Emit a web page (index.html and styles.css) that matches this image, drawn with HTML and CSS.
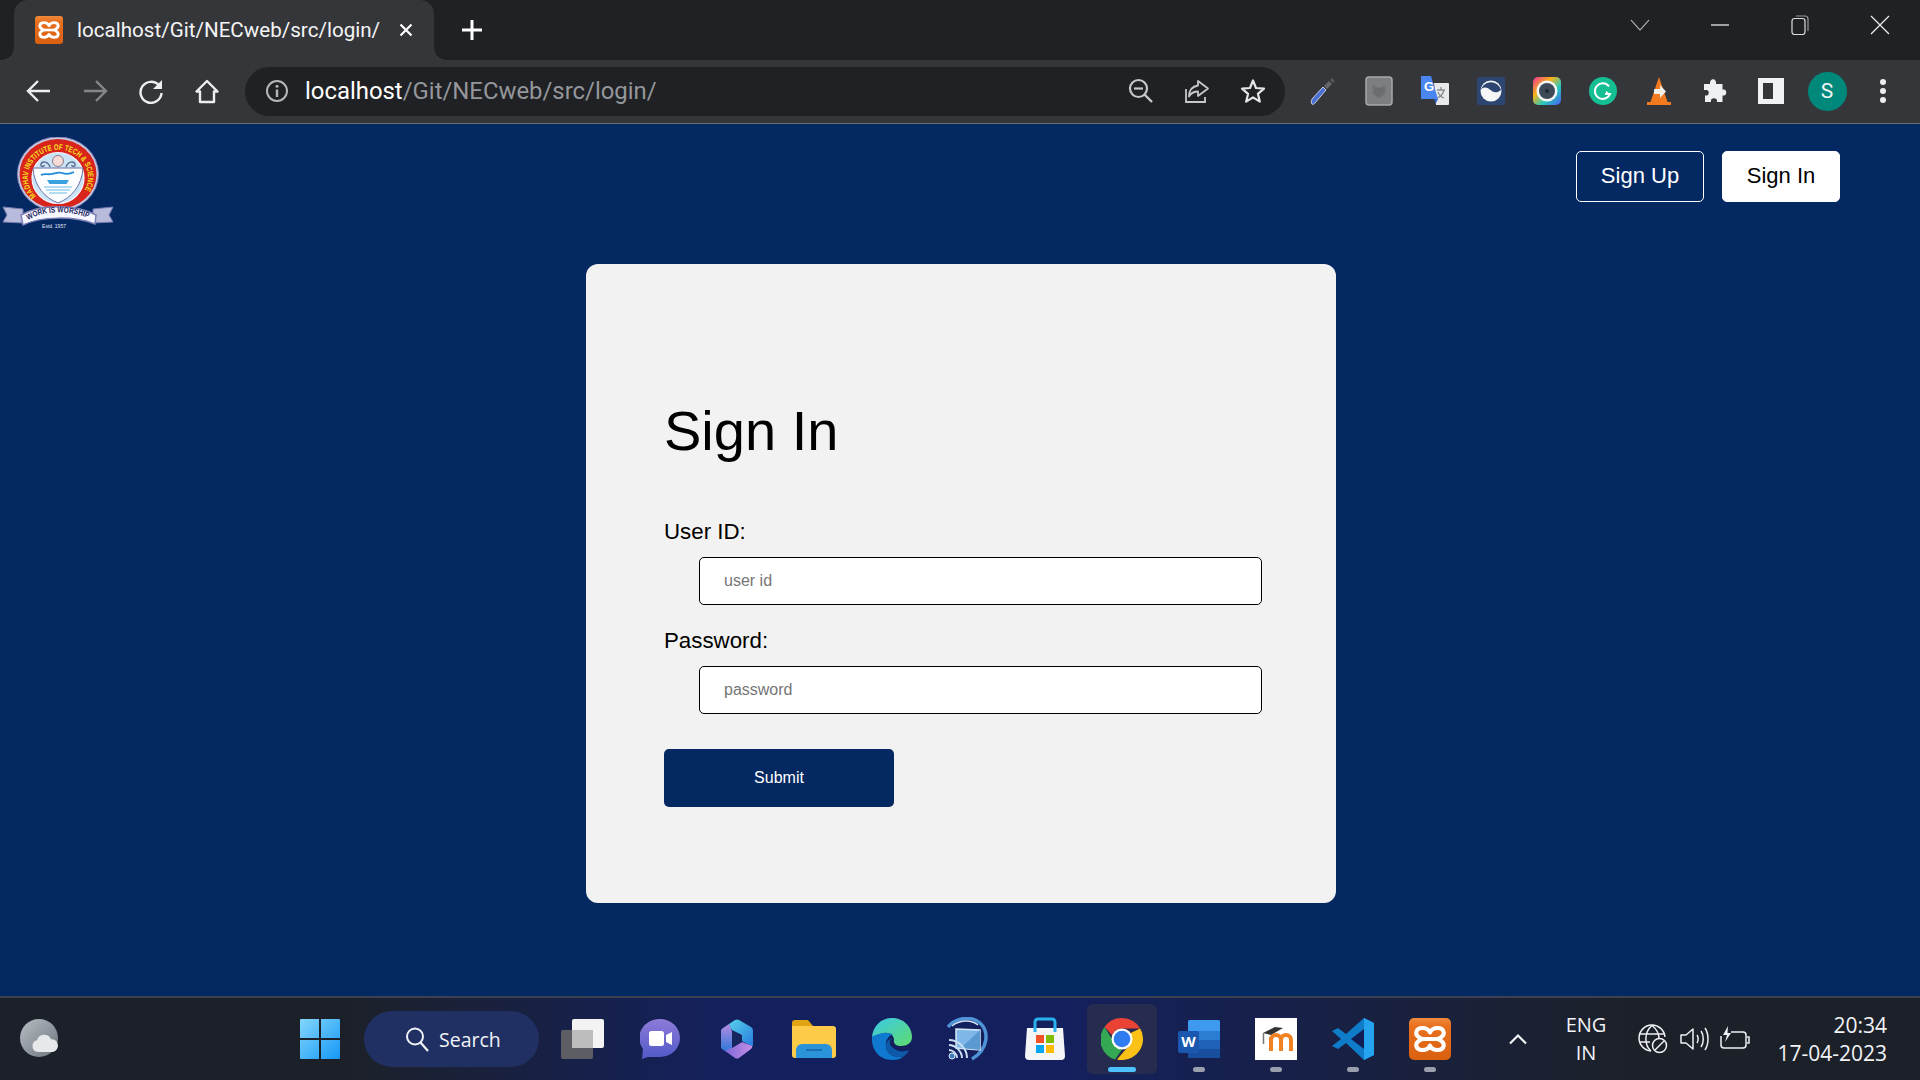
FILE: index.html
```html
<!DOCTYPE html>
<html lang="en">
<head>
    <meta charset="UTF-8">
    <meta name="viewport" content="width=device-width, initial-scale=1.0">
    <title>localhost/Git/NECweb/src/login/</title>
    <link rel="stylesheet" href="styles.css">
</head>
<body>
    <svg class="defs" width="0" height="0">
        <symbol id="xampp" viewBox="0 0 32 32">
            <path d="M16 11C14 6.500 6 6.500 5.500 11c-.3 3 2.500 4 4.500 5-2 1-4.800 2-4.500 5 .5 4.500 8.500 4.500 10.500 0 2 4.500 10 4.500 10.500 0 .3-3-2.500-4-4.500-5 2-1 4.800-2 4.500-5C26 6.500 18 6.500 16 11z" fill="none" stroke="#fff" stroke-width="3.200" stroke-linejoin="round"/>
            <path d="M10 16h12" stroke="#fff" stroke-width="3"/>
        </symbol>
        <linearGradient id="orange" x1="0" y1="0" x2="0" y2="1"><stop offset="0" stop-color="#f08a3c"/><stop offset=".2" stop-color="#e8701e"/><stop offset="1" stop-color="#d9600f"/></linearGradient>
    </svg>

    <div class="tabstrip">
        <div class="tab">
            <svg class="favicon" viewBox="0 0 28 28"><rect width="28" height="28" rx="3" fill="url(#orange)"/><use href="#xampp" x="0" y="0" width="28" height="28"/></svg>
            <span class="tab-title">localhost/Git/NECweb/src/login/</span>
            <svg class="tab-close" viewBox="0 0 14 14"><path d="M1.500 1.500l11 11M12.500 1.500l-11 11" stroke="#fff" stroke-width="2.200"/></svg>
        </div>
        <svg class="new-tab" viewBox="0 0 22 22"><path d="M11 1v20M1 11h20" stroke="#fff" stroke-width="3"/></svg>
        <div class="window-controls">
            <span class="win-btn"><svg width="20" height="12" viewBox="0 0 20 12"><path d="M1 1l9 10 9-10" fill="none" stroke="#c8c9cb" stroke-width="1.100"/></svg></span>
            <span class="win-btn"><svg width="20" height="4" viewBox="0 0 20 4"><path d="M1 2h18" stroke="#e8e8e8" stroke-width="1.300"/></svg></span>
            <span class="win-btn"><svg width="20" height="20" viewBox="0 0 20 20"><rect x="2" y="3.500" width="13" height="16" rx="2.500" fill="none" stroke="#dcdcdc" stroke-width="1.200"/><path d="M6 1h9c2 0 3 1 3 3v12" fill="none" stroke="#999" stroke-width="1.200"/></svg></span>
            <span class="win-btn"><svg width="20" height="20" viewBox="0 0 20 20"><path d="M1 1l18 18M19 1L1 19" stroke="#eee" stroke-width="1.200"/></svg></span>
        </div>
    </div>

    <div class="toolbar">
        <div class="tool-group">
            <span class="tool"><svg width="26" height="24" viewBox="0 0 26 24"><path d="M24 12H3M12 2L2 12l10 10" fill="none" stroke="#eceef0" stroke-width="2.400"/></svg></span>
            <span class="tool"><svg width="26" height="24" viewBox="0 0 26 24"><path d="M2 12h21M14 2l10 10-10 10" fill="none" stroke="#85878a" stroke-width="2.400"/></svg></span>
            <span class="tool"><svg width="26" height="26" viewBox="0 0 26 26"><path d="M21 7.500A10.500 10.500 0 1 0 23.500 15" fill="none" stroke="#eceef0" stroke-width="2.400"/><path d="M24 2v9h-9z" fill="#eceef0"/></svg></span>
            <span class="tool"><svg width="26" height="26" viewBox="0 0 26 26"><path d="M13 3L2.500 13.500H6V24h14V13.500h3.500z" fill="none" stroke="#eceef0" stroke-width="2.400" stroke-linejoin="round"/></svg></span>
        </div>
        <div class="omnibox">
            <span class="tool"><svg width="24" height="24" viewBox="0 0 24 24"><circle cx="12" cy="12" r="10" fill="none" stroke="#b4b6b8" stroke-width="2"/><path d="M12 10.500V18" stroke="#b4b6b8" stroke-width="2.400"/><circle cx="12" cy="7.200" r="1.500" fill="#b4b6b8"/></svg></span>
            <div class="url"><span class="url-host">localhost</span>/Git/NECweb/src/login/</div>
            <span class="tool"><svg width="26" height="26" viewBox="0 0 26 26"><circle cx="10.500" cy="10.500" r="8.500" fill="none" stroke="#c6c8ca" stroke-width="2.200"/><path d="M16.500 16.500L24 24" stroke="#c6c8ca" stroke-width="2.400"/><path d="M6 10.500h9" stroke="#c6c8ca" stroke-width="2.200"/></svg></span>
            <span class="tool"><svg width="26" height="26" viewBox="0 0 26 26"><path d="M14 3l10 7.500-10 7.500v-4.500c-4.500 0-7 1.500-9 5 0-6 3-10 9-11z" fill="none" stroke="#c6c8ca" stroke-width="1.800" stroke-linejoin="round"/><path d="M2 11v13h19v-5" fill="none" stroke="#c6c8ca" stroke-width="1.800"/></svg></span>
            <span class="tool"><svg width="26" height="26" viewBox="0 0 26 26"><path d="M13 2.500l3 7.500 8 .6-6.100 5.200 1.900 7.800L13 19.400l-6.800 4.200 1.900-7.800L2 10.600l8-.6z" fill="none" stroke="#e4e6e8" stroke-width="2.200" stroke-linejoin="round"/></svg></span>
        </div>
        <div class="tool-group">
            <span class="tool"><svg width="28" height="30" viewBox="0 0 28 30"><path d="M3 28c-1-1-1-3 0-5l11-12 3 3L6 27c-1 1-2 2-3 1z" fill="#4a6fd8" stroke="#c9ccd2" stroke-width="1"/><path d="M15 10l5-5 3 3-5 5z" fill="#66686c"/><path d="M21 4l2-2 3 3-2 2z" fill="#55575a"/></svg></span>
            <span class="tool"><svg width="28" height="30" viewBox="0 0 28 30"><rect x="1" y="1" width="26" height="28" rx="3" fill="#7c7e81" stroke="#a6a8aa" stroke-width="1.500"/><path d="M8 9l3 2.500h6L20 9v9l-6 4-6-4z" fill="#6b6d70" stroke="#737578"/></svg></span>
            <span class="tool"><svg width="30" height="32" viewBox="0 0 30 32"><path d="M14 8h14a1 1 0 0 1 1 1v20a1 1 0 0 1-1 1H16z" fill="#e8e9ea"/><path d="M21 12v3m-4 0h8m-1 0c-1 4-4 7-7 8m1-6c1 3 3 5 6 6" fill="none" stroke="#8a8d90" stroke-width="1.300"/><path d="M1 1h10l7 23H1z" fill="#4a86f0"/><path d="M14 24h4l-2.500 5z" fill="#2f5fc0"/><text class="g-letter" x="4" y="16">G</text></svg></span>
            <span class="tool"><svg width="28" height="28" viewBox="0 0 28 28"><rect width="28" height="28" rx="2" fill="#2d4571"/><circle cx="14" cy="14" r="10.500" fill="#f4f6f8"/><path d="M3.500 14c2-6 8-3 10-1s6 4 10.500 0A10.500 10.500 0 0 0 3.500 14z" fill="#2d4571"/></svg></span>
            <span class="tool"><svg width="28" height="28" viewBox="0 0 28 28"><defs><linearGradient id="rainbow" x1="0" y1="0" x2="1" y2="1"><stop offset="0" stop-color="#f0309a"/><stop offset=".35" stop-color="#f8b316"/><stop offset=".65" stop-color="#25c9c0"/><stop offset="1" stop-color="#4a5cf0"/></linearGradient></defs><rect width="28" height="28" rx="5" fill="url(#rainbow)"/><circle cx="14" cy="14" r="10.500" fill="#f4f6f8"/><circle cx="14" cy="14" r="8" fill="#3e4a58"/><circle cx="14" cy="14" r="2" fill="#1f2730"/></svg></span>
            <span class="tool"><svg width="28" height="28" viewBox="0 0 28 28"><circle cx="14" cy="14" r="14" fill="#15bf94"/><path d="M20 9.500A7.800 7.800 0 1 0 21 17h-5" fill="none" stroke="#fff" stroke-width="2"/><path d="M17 14.500l4 3.500" stroke="#fff" stroke-width="1.500"/></svg></span>
            <span class="tool"><svg width="24" height="28" viewBox="0 0 24 28"><path d="M12 0l8.500 25h-17z" fill="#f47a20"/><path d="M0 25h24v3H0z" fill="#f47a20"/><path d="M7 12h6V8l6 6.500-6 6.500v-4H7z" fill="#f2efe9"/></svg></span>
            <span class="tool"><svg width="26" height="26" viewBox="0 0 26 26"><path d="M10 1.500c2-1 4 .5 4 3V6h6.500v5.500H22c3 0 3 6 0 6h-1.500V24H15v-1.500c0-3-6-3-6 0V24H3v-6.500H4.500c3 0 3-5.500 0-5.500H2V6h6V4.500c0-1 .8-2.500 2-3z" fill="#eff0f1"/></svg></span>
            <span class="tool"><svg width="26" height="26" viewBox="0 0 26 26"><path d="M0 0h26v26H0zM5 5v16h10V5z" fill="#f1f2f3" fill-rule="evenodd"/></svg></span>
            <span class="tool"><span class="avatar">S</span></span>
            <span class="tool"><svg width="8" height="26" viewBox="0 0 8 26"><circle cx="4" cy="4" r="3" fill="#eee"/><circle cx="4" cy="13" r="3" fill="#eee"/><circle cx="4" cy="22" r="3" fill="#eee"/></svg></span>
        </div>
    </div>

    <main class="page">
        <header class="site-header">
            <svg class="logo" viewBox="0 0 115 92">
                <defs>
                    <path id="ringText" d="M36 59A30 27.500 0 1 1 80 59"/>
                    <path id="ribbonText" d="M28 83C44 73 72 73 90 82"/>
                </defs>
                <ellipse cx="58" cy="37" rx="40.500" ry="37" fill="#c9cbe6" stroke="#8488b8" stroke-width="1"/>
                <ellipse cx="58" cy="37" rx="38.500" ry="35" fill="#d9241c"/>
                <ellipse cx="58" cy="41" rx="26" ry="25.500" fill="#c9e4f4" stroke="#f6f6ff" stroke-width="1.200"/>
                <text class="logo-ring"><textPath href="#ringText" textLength="124" lengthAdjust="spacingAndGlyphs">MADHAV INSTITUTE OF TECH &amp; SCIENCE</textPath></text>
                <path d="M33 31H83C82 49 71 61 58 66 45 61 34 49 33 31z" fill="#fbfdff" stroke="#6d71a8" stroke-width="1"/>
                <circle cx="58" cy="24" r="5.500" fill="#f6dcd6" stroke="#8e7a90" stroke-width="1"/>
                <path d="M50 30c-2-6-8-6-9-3s4 3 3 1M66 30c2-6 8-6 9-3s-4 3-3 1" fill="none" stroke="#5c6a92" stroke-width="1.400"/>
                <path d="M41 38c4-2 7 0 11-1s7-2 10-1 8 1 12-1" fill="none" stroke="#1f8bd8" stroke-width="1.800"/>
                <path d="M47 43h22l-2.500 4h-17z" fill="#3aa0de"/>
                <path d="M44 50h28M46 53h24M49 56h18" stroke="#9ed2ee" stroke-width="1.500"/>
                <path d="M3 70l20 2v14l-20-1 4-7z" fill="#b9bbdc" stroke="#777bb0"/>
                <path d="M113 70l-20 2v14l20-1-4-7z" fill="#b9bbdc" stroke="#777bb0"/>
                <path d="M21 78C40 67 76 67 96 78l-1 9C74 79 42 79 23 88z" fill="#f7f7ff" stroke="#7d80b5" stroke-width="1.500"/>
                <text class="logo-motto"><textPath href="#ribbonText" textLength="62" lengthAdjust="spacingAndGlyphs">WORK IS WORSHIP</textPath></text>
                <text class="logo-estd" x="54" y="91">Estd. 1957</text>
            </svg>
            <nav class="site-nav">
                <a class="nav-btn nav-btn-outline">Sign Up</a>
                <a class="nav-btn nav-btn-solid">Sign In</a>
            </nav>
        </header>

        <section class="login-card">
            <h1>Sign In</h1>
            <form class="login-form">
                <label for="userid">User ID:</label>
                <input type="text" id="userid" placeholder="user id">
                <label for="password">Password:</label>
                <input type="password" id="password" placeholder="password">
                <button type="button" class="submit-btn">Submit</button>
            </form>
        </section>
    </main>

    <footer class="taskbar">
        <div class="task-left">
            <svg width="40" height="40" viewBox="0 0 40 40"><defs><linearGradient id="moon" x1="0" y1="0" x2="1" y2="1"><stop offset="0" stop-color="#b8bec4"/><stop offset="1" stop-color="#6d747c"/></linearGradient></defs><circle cx="19" cy="19" r="19" fill="url(#moon)"/><path d="M18 33a6 6 0 0 1-1-11.800 7.500 7.500 0 0 1 14-1A6.500 6.500 0 0 1 33 33z" fill="#e6e8ea"/></svg>
        </div>
        <div class="start">
            <svg width="40" height="40" viewBox="0 0 40 40"><defs><linearGradient id="winblue" x1="0" y1="0" x2="1" y2="1"><stop offset="0" stop-color="#84d6fc"/><stop offset="1" stop-color="#1598f6"/></linearGradient></defs><path d="M0 1a1 1 0 0 1 1-1h18v19H0zM21 0h18a1 1 0 0 1 1 1v18H21zM0 21h19v19H1a1 1 0 0 1-1-1zM21 21h19v18a1 1 0 0 1-1 1H21z" fill="url(#winblue)"/></svg>
        </div>
        <div class="search-pill">
            <svg width="26" height="26" viewBox="0 0 26 26"><circle cx="11" cy="10.500" r="8" fill="none" stroke="#f2f3f6" stroke-width="2"/><path d="M16.500 16.500L24 25" stroke="#f2f3f6" stroke-width="2.200"/></svg>
            <span>Search</span>
        </div>
        <div class="task-apps">
            <span class="app"><svg width="44" height="40" viewBox="0 0 44 40"><rect x="11" y="0" width="32" height="29" rx="2" fill="#f3f3f3"/><rect x="0" y="11" width="32" height="29" rx="2" fill="#6a6a6a" fill-opacity=".85"/><rect x="11" y="11" width="21" height="18" fill="#bdbdbd"/></svg></span>
            <span class="app"><svg width="40" height="40" viewBox="0 0 40 40"><defs><linearGradient id="teams" x1="0" y1="0" x2="0" y2="1"><stop offset="0" stop-color="#8d7bd8"/><stop offset="1" stop-color="#5159c8"/></linearGradient></defs><path d="M20 0a20 19 0 0 1 0 38H8l-6 2 1-10A20 19 0 0 1 20 0z" fill="url(#teams)"/><rect x="9" y="12" width="15" height="15" rx="2.500" fill="#fff"/><path d="M26 16l6-3v13l-6-3z" fill="#fff"/></svg></span>
            <span class="app"><svg width="34" height="40" viewBox="0 0 34 40"><defs><linearGradient id="bingTop" x1="0" y1="0" x2="1" y2="1"><stop offset="0" stop-color="#55d2ea"/><stop offset="1" stop-color="#2a7be0"/></linearGradient><linearGradient id="bingLeft" x1="0" y1="0" x2="0" y2="1"><stop offset="0" stop-color="#b58be2"/><stop offset="1" stop-color="#2f79d8"/></linearGradient><linearGradient id="bingBottom" x1="0" y1="0" x2="1" y2="0"><stop offset="0" stop-color="#7d68d8"/><stop offset="1" stop-color="#c58fe6"/></linearGradient></defs><path d="M1 12q0-2 2-3l6-4q3 4 3 8v18l-7 1-3-2q-1-1-1-2z" fill="url(#bingLeft)"/><path d="M9 5l6-4q2-1 4 0l12 7q2 1 2 4v14q0 2-2 1l-9-5v-4q0-2-2-3L12 11z" fill="url(#bingTop)"/><path d="M5 32l17-9 10 4q1 1-1 3l-12 9q-2 1-4 0z" fill="url(#bingBottom)"/><path d="M12 13l10 3v7l-10 6z" fill="#17265f"/></svg></span>
            <span class="app"><svg width="44" height="38" viewBox="0 0 44 38"><path d="M0 3a3 3 0 0 1 3-3h13l5 6H0z" fill="#e0a414"/><path d="M0 6h41a3 3 0 0 1 3 3v26a3 3 0 0 1-3 3H3a3 3 0 0 1-3-3z" fill="#fdcb48"/><path d="M4 38V30a6 6 0 0 1 6-6h24a6 6 0 0 1 6 6v8z" fill="#2b93da"/><path d="M14 30h16" stroke="#1a6fae" stroke-width="2"/></svg></span>
            <span class="app"><svg width="42" height="42" viewBox="0 0 42 42"><defs><linearGradient id="edge1" x1="0" y1="0" x2="1" y2="1"><stop offset="0" stop-color="#3ac8e8"/><stop offset="1" stop-color="#5fdc6e"/></linearGradient></defs><path d="M2 19C3 8 11 0 22 0c11 0 20 8 20 19 0 6-5 9-11 9-4 0-8-2-7-6 0-5-5-8-10-7-6 1-10 4-12 4z" fill="url(#edge1)"/><path d="M2 19c-1 12 7 23 20 23 5 0 9-1 12-4-8 3-17-1-18-9-1-6 2-11 7-13-9-3-19 1-21 3z" fill="#0f78cf"/><path d="M16 29c1 8 10 12 18 9 2-2 4-3 5-6-7 3-13 1-17-3-3-3-3-6 0-9-4 2-7 5-6 9z" fill="#0e5aa8"/></svg></span>
            <span class="app"><svg width="42" height="44" viewBox="0 -1 42 44"><path d="M1 9C8 0 24-3 33 5c9 8 9 26-8 36" fill="none" stroke="#4f94d6" stroke-width="3.500"/><path d="M5 8C12 2 24 1 31 7" fill="none" stroke="#cfe4f6" stroke-width="1.500"/><path d="M9 11l24 1v20l-24-2z" fill="#7fb8e8" stroke="#d6e8f7" stroke-width="1.500"/><path d="M33 12v20L14 30z" fill="#5b9ad0"/><path d="M2 22c9 0 18 8 18 18M2 27c6 0 13 6 13 13M2 32c4 0 8 4 8 8" fill="none" stroke="#c8dff2" stroke-width="2"/><circle cx="5" cy="38" r="3" fill="#3f7fc0" stroke="#dcecf8"/></svg></span>
            <span class="app"><svg width="40" height="44" viewBox="0 0 40 44"><path d="M2 11h36l2 28a4 4 0 0 1-4 4H4a4 4 0 0 1-4-4z" fill="#f4f5f6"/><path d="M10 15V5a3 3 0 0 1 3-3h14a3 3 0 0 1 3 3v10" fill="none" stroke="#2ab2ee" stroke-width="3"/><rect x="11" y="18" width="8" height="8" fill="#f05325"/><rect x="21" y="18" width="8" height="8" fill="#81bc06"/><rect x="11" y="28" width="8" height="8" fill="#05a6f0"/><rect x="21" y="28" width="8" height="8" fill="#ffba08"/></svg></span>
            <span class="app app-active"><svg width="42" height="42" viewBox="0 0 42 42"><path d="M21 0a21 21 0 0 1 18.200 10.500H21a10.500 10.500 0 0 0-9.800 6.800L3.500 9A21 21 0 0 1 21 0z" fill="#ea4335"/><path d="M3.500 9l8.700 13.900A10 10 0 0 0 21 31.500l-7 10.100A21 21 0 0 1 3.500 9z" fill="#34a853"/><path d="M39.200 10.500A21 21 0 0 1 16 41.400l9.500-11a10 10 0 0 0 3-14.900z" fill="#fbc116"/><circle cx="21" cy="21" r="10.500" fill="#fff"/><circle cx="21" cy="21" r="8.300" fill="#2f7cf0"/></svg><i class="run-dot run-dot-on"></i></span>
            <span class="app"><svg width="42" height="38" viewBox="0 0 42 38"><rect x="10" y="0" width="32" height="38" rx="2" fill="#1f62b8"/><path d="M12 0h28a2 2 0 0 1 2 2v9H10V2a2 2 0 0 1 2-2z" fill="#3e9aee"/><rect x="10" y="11" width="32" height="9" fill="#2b7cd3"/><rect x="10" y="29" width="32" height="9" fill="#174f9e"/><rect x="0" y="11" width="21" height="22" rx="2" fill="#1a57ae"/><text class="word-letter" x="10.500" y="27">W</text></svg><i class="run-dot"></i></span>
            <span class="app"><span class="moodle"><svg width="42" height="42" viewBox="0 0 42 42"><path d="M8 15l12-6 8 1-12 7z" fill="#333"/><path d="M8.500 15v11" stroke="#777" stroke-width="1.500"/><path d="M16 33V22c0-3 2-5 5-5s5 2 5 5v11M26 22c0-3 2-5 5-5s5 2 5 5v11" fill="none" stroke="#f08224" stroke-width="4"/><path d="M14 19h4v14h-4z" fill="#f08224"/></svg></span><i class="run-dot"></i></span>
            <span class="app"><svg width="42" height="42" viewBox="0 0 42 42"><path d="M32 0l10 5v32l-10 5-18-17-8 6-6-3 9-7-9-8 6-3 8 6z" fill="#0e7cc8"/><path d="M32 0l10 5v32l-10 5z" fill="#24a4ee"/><path d="M32 11L19 21l13 10z" fill="#111c50"/></svg><i class="run-dot"></i></span>
            <span class="app"><svg width="42" height="42" viewBox="0 0 42 42"><rect width="42" height="42" rx="5" fill="url(#orange)"/><use href="#xampp" x="0" y="0" width="42" height="42"/></svg><i class="run-dot"></i></span>
        </div>
        <div class="tray">
            <svg class="tray-chevron" width="20" height="12" viewBox="0 0 20 12"><path d="M2 10.500l8-8 8 8" fill="none" stroke="#f2f3f6" stroke-width="2.200"/></svg>
            <div class="lang"><span>ENG</span><span>IN</span></div>
            <div class="tray-icons">
                <svg width="30" height="30" viewBox="0 0 30 30"><g fill="none" stroke="#eef0f3" stroke-width="1.500"><path d="M27 13A13 13 0 1 0 13 27"/><path d="M2 10h24M2 18h10M14 1.500C6 8 6 21 13 27M14 1.500c5 4 7 9 7 13"/><circle cx="21.500" cy="21.500" r="7"/><path d="M17 26l9-9"/></g></svg>
                <svg width="30" height="26" viewBox="0 0 30 26"><g fill="none" stroke="#eef0f3" stroke-width="1.500"><path d="M2 9v8h5l7 6V3L7 9z" stroke-linejoin="round"/><path d="M18 9c1.500 2 1.500 6 0 8M22 5c3 4 3 12 0 16M26 2c4 6 4 16 0 22"/></g></svg>
                <svg width="30" height="28" viewBox="0 0 30 28"><g fill="none" stroke="#eef0f3" stroke-width="1.500"><path d="M11 7h12a3 3 0 0 1 3 3v10a3 3 0 0 1-3 3H4a3 3 0 0 1-3-3V11"/><path d="M27 12h2v6h-2"/></g><path d="M8 1L3 10h4l-2 7 6-9H7.500z" fill="#eef0f3"/></svg>
            </div>
            <div class="clock"><span>20:34</span><span>17-04-2023</span></div>
        </div>
    </footer>
</body>
</html>
```

FILE: styles.css
```css
* {
    box-sizing: border-box;
}
html, body {
    height: 100%;
}
body {
    margin: 0;
    display: flex;
    flex-direction: column;
    font-family: "Liberation Sans", Arial, sans-serif;
    background: #042962;
    overflow: hidden;
}
.defs {
    display: block;
    height: 0;
}

/* browser chrome */
.tabstrip {
    display: flex;
    align-items: center;
    height: 60px;
    padding-left: 14px;
    background: #202124;
    font-family: Roboto, "Noto Sans", sans-serif;
}
.tab {
    position: relative;
    display: flex;
    align-items: center;
    width: 420px;
    height: 60px;
    padding: 0 20px 0 21px;
    background: #35363a;
    border-radius: 14px 14px 0 0;
}
.tab::before, .tab::after {
    content: "";
    position: absolute;
    bottom: 0;
    width: 12px;
    height: 12px;
}
.tab::before {
    left: -12px;
    background: radial-gradient(circle at 0 0, transparent 11.500px, #35363a 12px);
}
.tab::after {
    right: -12px;
    background: radial-gradient(circle at 100% 0, transparent 11.500px, #35363a 12px);
}
.favicon {
    width: 28px;
    height: 28px;
    flex: none;
}
.tab-title {
    flex: 1;
    margin-left: 14px;
    color: #f4f5f6;
    font-size: 20.600px;
    white-space: nowrap;
}
.tab-close {
    width: 14px;
    height: 14px;
    margin-right: 1px;
}
.new-tab {
    width: 22px;
    height: 22px;
    margin-left: 27px;
}
.window-controls {
    display: flex;
    margin-left: auto;
    align-self: flex-start;
}
.win-btn {
    display: flex;
    align-items: center;
    justify-content: center;
    width: 80px;
    height: 50px;
}
.toolbar {
    display: flex;
    align-items: center;
    height: 64px;
    padding: 0 9px 1px 11px;
    background: #35363a;
    border-bottom: 1px solid #6d6f73;
}
.tool-group {
    display: flex;
    align-items: center;
}
.tool {
    display: flex;
    align-items: center;
    justify-content: center;
    width: 56px;
    height: 49px;
    flex: none;
}
.omnibox {
    display: flex;
    align-items: center;
    flex: 1;
    height: 49px;
    margin: 0 10px;
    padding: 0 4px;
    background: #202124;
    border-radius: 25px;
}
.url {
    flex: 1;
    color: #94979b;
    font-family: Roboto, "Noto Sans", sans-serif;
    font-size: 23.900px;
    white-space: nowrap;
}
.url-host {
    color: #fff;
}
.avatar {
    display: flex;
    align-items: center;
    justify-content: center;
    width: 39px;
    height: 39px;
    border-radius: 50%;
    background: #00897b;
    color: #f4f5f6;
    font-family: Roboto, sans-serif;
    font-size: 21px;
}
.g-letter {
    fill: #fff;
    font-family: "Liberation Sans", sans-serif;
    font-size: 13px;
    font-weight: bold;
}

/* the page */
.page {
    flex: 1;
    min-height: 0;
    display: flex;
    flex-direction: column;
}
.site-header {
    display: flex;
    justify-content: space-between;
    height: 140px;
    padding-right: 80px;
}
.logo {
    width: 115px;
    height: 92px;
    margin-top: 13px;
}
.logo-ring {
    fill: #f8e21c;
    font-family: "Liberation Sans", sans-serif;
    font-size: 8px;
    font-weight: bold;
}
.logo-motto {
    fill: #23265e;
    font-family: "Liberation Sans", sans-serif;
    font-size: 8px;
    font-weight: bold;
}
.logo-estd {
    fill: #e6e7f4;
    font-family: "Liberation Sans", sans-serif;
    font-size: 5px;
    text-anchor: middle;
}
.site-nav {
    display: flex;
    gap: 18px;
    margin-top: 27px;
    align-items: flex-start;
}
.nav-btn {
    display: flex;
    align-items: center;
    justify-content: center;
    height: 51px;
    padding-bottom: 2px;
    font-size: 22px;
    border-radius: 5px;
    border: 1px solid #fff;
}
.nav-btn-outline {
    width: 128px;
    color: #fff;
}
.nav-btn-solid {
    width: 118px;
    background: #fff;
    color: #000;
}
.login-card {
    width: 750px;
    height: 639px;
    margin-left: 586px;
    padding: 135px 74px 96px 78px;
    background: #f2f2f2;
    border-radius: 12px;
}
.login-card h1 {
    margin: 0 0 56px;
    font-size: 56px;
    font-weight: normal;
    line-height: 64px;
    color: #000;
}
.login-form {
    display: flex;
    flex-direction: column;
    align-items: flex-start;
}
.login-form label {
    font-size: 22.300px;
    line-height: 26px;
    color: #000;
    margin-bottom: 12px;
}
.login-form input {
    width: 563px;
    height: 48px;
    margin: 0 0 23px 35px;
    padding: 0 24px;
    border: 1px solid #000;
    border-radius: 5px;
    background: #fff;
    font-family: "Liberation Sans", sans-serif;
    font-size: 16px;
}
.login-form input::placeholder {
    color: #757575;
}
.submit-btn {
    width: 230px;
    height: 58px;
    margin-top: 12px;
    background: #042962;
    color: #fff;
    border: none;
    border-radius: 5px;
    font-family: "Liberation Sans", sans-serif;
    font-size: 16px;
}

/* windows taskbar */
.taskbar {
    display: flex;
    align-items: center;
    height: 84px;
    flex: none;
    border-top: 2px solid #3b4150;
    background: linear-gradient(90deg, #1c2129 0, #1c2129 18%, #14205e 38%, #14205e 55%, #1c2129 85%, #1c2129 100%);
    color: #f2f3f6;
    font-family: "Open Sans", "Noto Sans", sans-serif;
}
.task-left {
    display: flex;
    width: 282px;
    padding-left: 20px;
}
.start {
    display: flex;
    justify-content: center;
    width: 76px;
}
.search-pill {
    display: flex;
    align-items: center;
    gap: 9px;
    width: 175px;
    height: 56px;
    margin-left: 6px;
    padding-left: 40px;
    border-radius: 28px;
    background: #203063;
    font-size: 19.500px;
}
.task-apps {
    display: flex;
    margin-left: 5px;
}
.app {
    position: relative;
    display: flex;
    align-items: center;
    justify-content: center;
    width: 77px;
    height: 70px;
}
.app-active {
    width: 70px;
    margin: 0 3.500px;
    background: #262c4f;
    border-radius: 6px;
}
.run-dot {
    position: absolute;
    left: 50%;
    bottom: 2px;
    width: 12px;
    height: 5px;
    margin-left: -6px;
    border-radius: 3px;
    background: #9a9fae;
}
.run-dot-on {
    width: 28px;
    margin-left: -14px;
    background: #4cc2ff;
}
.word-letter {
    fill: #fff;
    font-family: "Open Sans", sans-serif;
    font-size: 15px;
    font-weight: bold;
    text-anchor: middle;
}
.moodle {
    display: block;
    width: 42px;
    height: 42px;
    background: #fff;
}
.moodle svg {
    display: block;
}
.tray {
    display: flex;
    align-items: center;
    flex: 1;
    padding-right: 33px;
}
.tray-chevron {
    margin-left: 40px;
}
.lang {
    display: flex;
    flex-direction: column;
    align-items: center;
    width: 60px;
    margin-left: 28px;
    font-size: 20px;
    line-height: 28px;
}
.tray-icons {
    display: flex;
    align-items: center;
    gap: 11px;
    margin-left: 22px;
}
.clock {
    display: flex;
    flex-direction: column;
    align-items: flex-end;
    margin-left: auto;
    font-size: 21px;
    line-height: 28px;
}
```
